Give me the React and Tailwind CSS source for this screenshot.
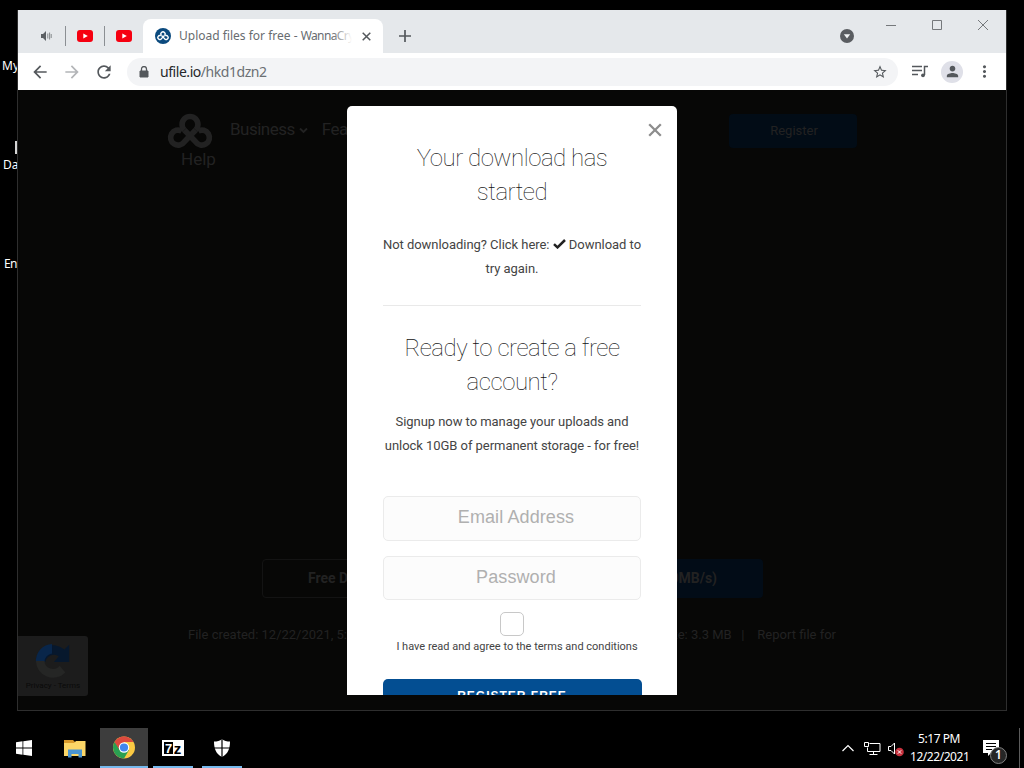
import React from "react";

function Icon({ d, size = 20, className = "" }) {
  return (
    <svg
      width={size}
      height={size}
      viewBox="0 0 24 24"
      fill="currentColor"
      className={`shrink-0 ${className}`}
    >
      <path d={d} />
    </svg>
  );
}

const paths = {
  back: "M20 11H7.83l5.59-5.59L12 4l-8 8 8 8 1.41-1.41L7.83 13H20v-2z",
  forward: "M12 4l-1.41 1.41L16.17 11H4v2h12.17l-5.58 5.59L12 20l8-8z",
  reload:
    "M17.65 6.35C16.2 4.9 14.21 4 12 4c-4.42 0-7.99 3.58-7.99 8s3.57 8 7.99 8c3.73 0 6.84-2.55 7.73-6h-2.08c-.82 2.33-3.04 4-5.65 4-3.31 0-6-2.69-6-6s2.69-6 6-6c1.66 0 3.14.69 4.22 1.78L13 11h7V4l-2.35 2.35z",
  star: "M22 9.24l-7.19-.62L12 2 9.19 8.63 2 9.24l5.46 4.73L5.82 21 12 17.27 18.18 21l-1.63-7.03L22 9.24zM12 15.4l-3.76 2.27 1-4.28-3.32-2.88 4.38-.38L12 6.1l1.71 4.04 4.38.38-3.32 2.88 1 4.28L12 15.4z",
  person:
    "M12 12c2.21 0 4-1.79 4-4s-1.79-4-4-4-4 1.79-4 4 1.79 4 4 4zm0 2c-2.67 0-8 1.34-8 4v2h16v-2c0-2.66-5.33-4-8-4z",
  dots: "M12 8c1.1 0 2-.9 2-2s-.9-2-2-2-2 .9-2 2 .9 2 2 2zm0 2c-1.1 0-2 .9-2 2s.9 2 2 2 2-.9 2-2-.9-2-2-2zm0 6c-1.1 0-2 .9-2 2s.9 2 2 2 2-.9 2-2-.9-2-2-2z",
};

// three looped cloud knot
function KnotLogo({ className, strokeWidth = 5.5 }) {
  return (
    <svg viewBox="0 0 44 35" className={className} fill="none">
      <g stroke="currentColor" strokeWidth={strokeWidth}>
        <path d="M27.5 16.5L16.5 28A7.3 7.3 0 1 1 14 17.5" />
        <path d="M16.5 16.5L27.5 28A7.3 7.3 0 1 0 30 17.5" />
        <path d="M16.5 16.5A7.700 7.700 0 1 1 27.5 16.5" />
      </g>
    </svg>
  );
}

function YouTube() {
  return (
    <svg width="16" height="12" viewBox="0 0 16 12">
      <rect width="16" height="12" rx="3" fill="#f60010" />
      <path d="M6.3 3.4v5.2L10.8 6z" fill="#fff" />
    </svg>
  );
}

function TabStrip() {
  return (
    <div className="flex h-[43px] bg-[#e5e8eb] text-[#5f6368]">
      <div className="flex h-[52px] w-[125px] shrink-0 items-center">
        <svg width="12" height="12" viewBox="0 0 12 12" className="ml-[22px]">
          <path d="M1 4h2l3-3v10L3 8H1z" fill="#5b5f63" />
          <path
            d="M7.8 3.5v5M9.6 2.5v7M11.2 4v4"
            stroke="#85898c"
            strokeWidth="1"
            fill="none"
          />
        </svg>
        <div className="ml-[13px] h-5 w-px bg-[#8b8f93]" />
        <div className="ml-[11px]">
          <YouTube />
        </div>
        <div className="ml-[11px] h-5 w-px bg-[#8b8f93]" />
        <div className="ml-[11px]">
          <YouTube />
        </div>
      </div>
      <div className="mt-[9px] flex h-[34px] w-[240px] items-center rounded-t-lg bg-white pr-2.5 pl-3">
        <div className="flex size-4 shrink-0 items-center justify-center rounded-full bg-[#0b4a7e]">
          <KnotLogo className="w-3 text-white" strokeWidth={5} />
        </div>
        <div className="relative ml-2 w-[173px] overflow-hidden text-[12px] whitespace-nowrap text-[#686c70]">
          Upload files for free - <span className="tracking-[-0.6px]">WannaCrypt0r</span>
          <div className="absolute inset-y-0 right-0 w-5 bg-linear-to-r from-transparent to-white" />
        </div>
        <svg width="9" height="9" viewBox="0 0 9 9" className="mr-[2px] ml-auto">
          <path d="M.7.7l7.6 7.6M8.3.7L.7 8.3" stroke="#54585c" strokeWidth="1.5" />
        </svg>
      </div>
      <svg width="12" height="12" viewBox="0 0 12 12" className="mt-5 ml-4">
        <path d="M6 0v12M0 6h12" stroke="#54585c" strokeWidth="1.7" />
      </svg>
      <svg width="14" height="14" viewBox="0 0 14 14" className="mt-[19px] ml-[429px]">
        <circle cx="7" cy="7" r="7" fill="#5a5d61" />
        <path d="M3.8 5.2h6.4L7 9.5z" fill="#f1f3f4" />
      </svg>
      <svg
        width="103"
        height="12"
        viewBox="0 0 103 12"
        className="mt-[9px] ml-8 shrink-0"
        fill="none"
        stroke="#75787b"
      >
        <path d="M0 6.5h10M46.5 1.5h9v9h-9z" />
        <path d="M92 1l10 10M102 1L92 11" />
      </svg>
    </div>
  );
}

function Toolbar() {
  return (
    <div className="flex h-[37px] items-center bg-white text-[#54585c]">
      <Icon d={paths.back} className="ml-3" />
      <Icon d={paths.forward} className="ml-3 text-[#b3b5b8]" />
      <Icon d={paths.reload} className="ml-3" />
      <div className="ml-[13px] flex h-7 w-[771px] items-center rounded-full bg-[#f3f4f6] pr-2.5 pl-3">
        <svg width="10" height="12" viewBox="0 0 10 12">
          <path d="M1 5h8v6H1z" fill="currentColor" stroke="currentColor" />
          <path d="M2.5 5V3a2.5 2.5 0 0 1 5 0v2" fill="none" stroke="currentColor" strokeWidth="1.3" />
        </svg>
        <div className="-mt-px ml-[11px] flex-1 text-[14px] tracking-[-0.45px] text-[#6b6f73]">
          <span className="text-[#26282b]">ufile.io</span>/hkd1dzn2
        </div>
        <Icon d={paths.star} size={16} />
      </div>
      <svg
        width="16"
        height="13"
        viewBox="0 0 16 13"
        className="ml-3.5"
        fill="none"
        stroke="currentColor"
        strokeWidth="1.5"
      >
        <path d="M0 1.5h10M0 5.5h10M0 9.5h6M12.5 10V1.5H16" />
        <circle cx="11" cy="10.3" r="1.9" fill="currentColor" stroke="none" />
      </svg>
      <div className="ml-[13px] flex size-[22px] items-center justify-center rounded-full bg-[#dfe0e8]">
        <Icon d={paths.person} size={17} />
      </div>
      <Icon d={paths.dots} size={19} className="ml-3" />
    </div>
  );
}

function Modal() {
  return (
    <div className="absolute top-4 left-[329px] flex h-[589px] w-[330px] flex-col items-center overflow-hidden rounded-t-[5px] bg-white px-9 text-center font-[Roboto,sans-serif] text-[#444]">
      <svg
        width="14"
        height="14"
        viewBox="0 0 14 14"
        className="absolute top-[17px] right-[15px]"
      >
        <path d="M1.2 1.2l11.6 11.6M12.8 1.2L1.2 12.8" stroke="#8d8d8d" strokeWidth="2.3" />
      </svg>
      <h2 className="mt-[35px] text-[24px] leading-[34px] font-thin tracking-[-0.48px] text-[#111]">
        Your download has
        <br />
        started
      </h2>
      <p className="mt-6 text-[13px] leading-6 tracking-[-0.04px] whitespace-nowrap">
        Not downloading? Click here:{" "}
        <svg width="13" height="10" viewBox="0 0 13 10" className="inline align-baseline">
          <path d="M1 5.2l3.5 3.2L12 1" fill="none" stroke="#222" strokeWidth="2.5" />
        </svg>{" "}
        Download to
        <br />
        try again.
      </p>
      <div className="mt-[24px] h-px w-full shrink-0 bg-[#e9e9e9]" />
      <h2 className="mt-[25px] text-[24px] leading-[34px] font-thin tracking-[-0.46px] whitespace-nowrap text-[#111]">
        Ready to create a free
        <br />
        account?
      </h2>
      <p className="mt-[11px] text-[13px] leading-6 tracking-[-0.05px] whitespace-nowrap">
        Signup now to manage your uploads and
        <br />
        unlock 10GB of permanent storage - for free!
      </p>
      <div className="mt-[38px] flex h-[45px] w-full shrink-0 items-center justify-center rounded-[5px] border border-[#ebebeb] bg-[#fcfcfc] pb-0.5 pl-2 font-['Liberation_Sans',sans-serif] text-[18px] tracking-[0.1px] text-[#b0b0b0]">
        Email Address
      </div>
      <div className="mt-[15px] flex h-[44px] w-full shrink-0 items-center justify-center rounded-[5px] border border-[#ebebeb] bg-[#fcfcfc] pb-0.5 pl-2 font-['Liberation_Sans',sans-serif] text-[18px] tracking-[0.1px] text-[#b0b0b0]">
        Password
      </div>
      <div className="mt-3 size-6 shrink-0 rounded-[5px] border border-[#c8c8c8]" />
      <div className="mt-[3px] pl-2.5 text-[11px] leading-4 whitespace-nowrap">
        I have read and agree to the terms and conditions
      </div>
      <div className="mt-6 h-10 w-[259px] shrink-0 rounded-[5px] bg-[#034e92] pt-[9px] font-['Liberation_Sans',sans-serif] text-[12px] leading-4 font-bold tracking-[1px] text-white">
        REGISTER FREE
      </div>
    </div>
  );
}

function Recaptcha() {
  return (
    <div className="flex h-[60px] w-[70px] flex-col items-center rounded-r-[3px] bg-[#1c1c1c] pt-1.5">
      <svg width="38" height="38" viewBox="0 0 40 38">
        <path d="M2 20A18 18 0 0 1 32 7l5-5v18H21l5-6a9 9 0 0 0-14 6z" fill="#07182d" />
        <path d="M2 20A18 18 0 0 1 19 1v10a9 9 0 0 0-8 9z" fill="#09264a" />
        <path d="M2 19l9 0a9 9 0 0 0 16 5l6 7A18 18 0 0 1 2 19z" fill="#252625" />
      </svg>
      <div className="text-[8px] leading-3 text-[#0a0a0a]">Privacy - Terms</div>
    </div>
  );
}

function Page() {
  return (
    <div className="relative flex-1 overflow-hidden bg-[#070706] font-[Roboto,sans-serif] text-[#222]">
      <div className="flex pt-5 pl-[149px]">
        <KnotLogo className="mt-[3px] h-[36px] w-[46px] text-[#222]" />
        <div className="ml-[17px] flex items-center gap-1 self-start pt-[7px] text-[17px] leading-6 tracking-[-0.5px]">
          Business
          <svg width="9" height="7" viewBox="0 0 9 7" className="mt-0.5">
            <path d="M1 1.5l3.5 3.5L8 1.5" fill="none" stroke="currentColor" strokeWidth="1.8" />
          </svg>
          <span className="ml-2.5">Features</span>
        </div>
        <div className="mt-1 mr-[149px] ml-auto flex h-[34px] w-[128px] items-center justify-center rounded-[4px] bg-[#020c16] pl-0.5 text-[13px]">
          Register
        </div>
      </div>
      <div className="ml-[163px] text-[17px] leading-5">Help</div>
      <div className="mt-[390px] ml-[244px] flex h-[39px] w-[501px] items-center text-[14px] font-bold">
        <div className="flex h-full flex-1 items-center rounded-[4px] border border-[#131313] pl-[45px]">
          Free Download
        </div>
        <div className="ml-3 flex h-full flex-1 items-center justify-end rounded-[4px] bg-[#020c17] pr-[46px]">
          Fast Download (50MB/s)
        </div>
      </div>
      <div className="mt-[27px] flex text-[13px] leading-5 whitespace-pre">
        <div className="ml-[170px] w-[300px]">File created: 12/22/2021, 5:17 PM</div>
        <div className="w-[348px] text-right">File size: 3.3 MB   |    Report file for</div>
      </div>
      <div className="mt-[-9px]">
        <Recaptcha />
      </div>
      <Modal />
    </div>
  );
}

function DesktopLabels() {
  return (
    <div className="absolute top-0 left-0 h-[720px] w-[17px] overflow-hidden text-[12px] leading-4 whitespace-nowrap text-white">
      <div className="mt-[58px] ml-0.5">My</div>
      <div className="mt-[67px] ml-[15px] h-[13px] w-0.5 bg-[#d5d5d5]" />
      <div className="mt-[3px] ml-[3px]">Da</div>
      <div className="mt-[83px] ml-1 tracking-[-0.6px]">En</div>
    </div>
  );
}

function Taskbar() {
  return (
    <div className="flex h-10 shrink-0 items-stretch bg-black text-white">
      <div className="flex w-[50px] items-center justify-center">
        <svg width="16" height="16" viewBox="0 0 16 16" className="-ml-0.5" fill="#fff">
          <path d="M0 2.200l6.500-.9v6.200H0zM7.300 1.200L16 0v7.500H7.300zM0 8.500h6.500v6.200L0 13.800zM7.300 8.500H16V16l-8.700-1.200z" />
        </svg>
      </div>
      <div className="flex w-[50px] items-center justify-center">
        <svg width="22" height="19" viewBox="0 0 22 19">
          <path d="M0 1h9l2 2h10v14H0z" fill="#d99a2b" />
          <path d="M0 4h10l2-2h9.500v15H0z" fill="#fbd667" />
          <path d="M4 18.500V10.500h14v8h-3.500v-3.500h-7v3.500z" fill="#4a94cf" />
        </svg>
      </div>
      <div className="flex w-12 flex-col items-center bg-[#3d3d3d]">
        <svg width="22" height="23" viewBox="0 0 22 22" className="mt-2">
          <circle cx="11" cy="11" r="11" fill="#fbc943" />
          <path d="M11 11L1.500 5.500A11 11 0 0 0 11 22l5-8.500z" fill="#2aa052" />
          <path d="M11 11L1.500 5.500a11 11 0 0 1 19 0H11z" fill="#dd4a3e" />
          <path d="M1.500 5.500L7 14l4-8z" fill="#dd4a3e" />
          <circle cx="11" cy="11" r="5.200" fill="#fff" />
          <circle cx="11" cy="11" r="4.100" fill="#4286ee" />
        </svg>
        <div className="mt-auto h-0.5 w-full bg-[#76b9ed]" />
      </div>
      <div className="ml-[5px] flex w-10 flex-col items-center">
        <div className="mt-3 flex h-4 w-[22px] shrink-0 border-2 border-white bg-white">
          <div className="w-[9px] bg-black text-center font-['Liberation_Sans',sans-serif] text-[13px] leading-[13px] font-bold text-white">
            7
          </div>
          <div className="flex-1 text-center font-['Liberation_Sans',sans-serif] text-[15px] leading-[13px] font-bold text-black">
            z
          </div>
        </div>
        <div className="mt-auto h-0.5 w-full bg-[#76b9ed]" />
      </div>
      <div className="ml-[9px] flex w-10 flex-col items-center">
        <svg width="18" height="18" viewBox="0 0 18 18" className="mt-[11px]">
          <path d="M9 0c2 1.800 5 2.600 8 2.600C17 10 15 15 9 18 3 15 1 10 1 2.600 4 2.600 7 1.800 9 0z" fill="#fff" />
          <path d="M9 0v18M0 9h18" stroke="#000" strokeWidth="1.200" />
        </svg>
        <div className="mt-auto h-0.5 w-full bg-[#76b9ed]" />
      </div>
      <div className="ml-auto flex items-center">
        <svg width="12" height="8" viewBox="0 0 12 8" fill="none" stroke="#fff" strokeWidth="1.200">
          <path d="M.5 7L6 1.500 11.500 7" />
        </svg>
        <svg width="17" height="14" viewBox="0 0 17 14" className="mt-px ml-2.5" fill="none" stroke="#fff">
          <path d="M5.500 1.500h10.500v8H3.500V5.500M.5.500h4v4h-4zM9.500 9.500v3M5.500 12.500h8" />
        </svg>
        <svg width="16" height="15" viewBox="0 0 16 15" className="mt-0.5 ml-[7px]">
          <path d="M.5 4.500H3l3.500-3.500v11L3 8.500H.5z" fill="none" stroke="#fff" />
          <circle cx="11.500" cy="10" r="4.300" fill="#c8323e" />
          <path d="M9.800 8.300l3.400 3.400M13.200 8.300l-3.400 3.400" stroke="#fff" />
        </svg>
        <div className="ml-[6px] w-[58px] text-center text-[12px] leading-[18px] tracking-[-0.45px] whitespace-nowrap">
          <div>5:17 PM</div>
          <div>12/22/2021</div>
        </div>
        <div className="relative ml-[15px] h-[27px] w-6">
          <svg width="16" height="16" viewBox="0 0 16 16" className="mt-[5px]">
            <path d="M0 0h16v13H8l-3 3v-3H0z" fill="#fff" />
            <path d="M3 3.500h10M3 6.500h10M3 9.500h6" stroke="#000" />
          </svg>
          <div className="absolute top-3 left-[7px] flex size-[17px] items-center justify-center rounded-full border border-[#808080] bg-[#262626] text-[12px] font-semibold">
            1
          </div>
        </div>
        <div className="mr-1 ml-[12px] h-10 w-px bg-[#5c5c5c]" />
      </div>
    </div>
  );
}

function App() {
  return (
    <div className="relative flex h-[768px] w-[1024px] flex-col overflow-hidden bg-black font-['Noto_Sans',sans-serif]">
      <DesktopLabels />
      <div className="mt-2.5 mb-[17px] ml-[17px] flex w-[990px] flex-1 flex-col border-x border-b border-[#2e2e2e]">
        <TabStrip />
        <Toolbar />
        <Page />
      </div>
      <Taskbar />
    </div>
  );
}

export default App;
